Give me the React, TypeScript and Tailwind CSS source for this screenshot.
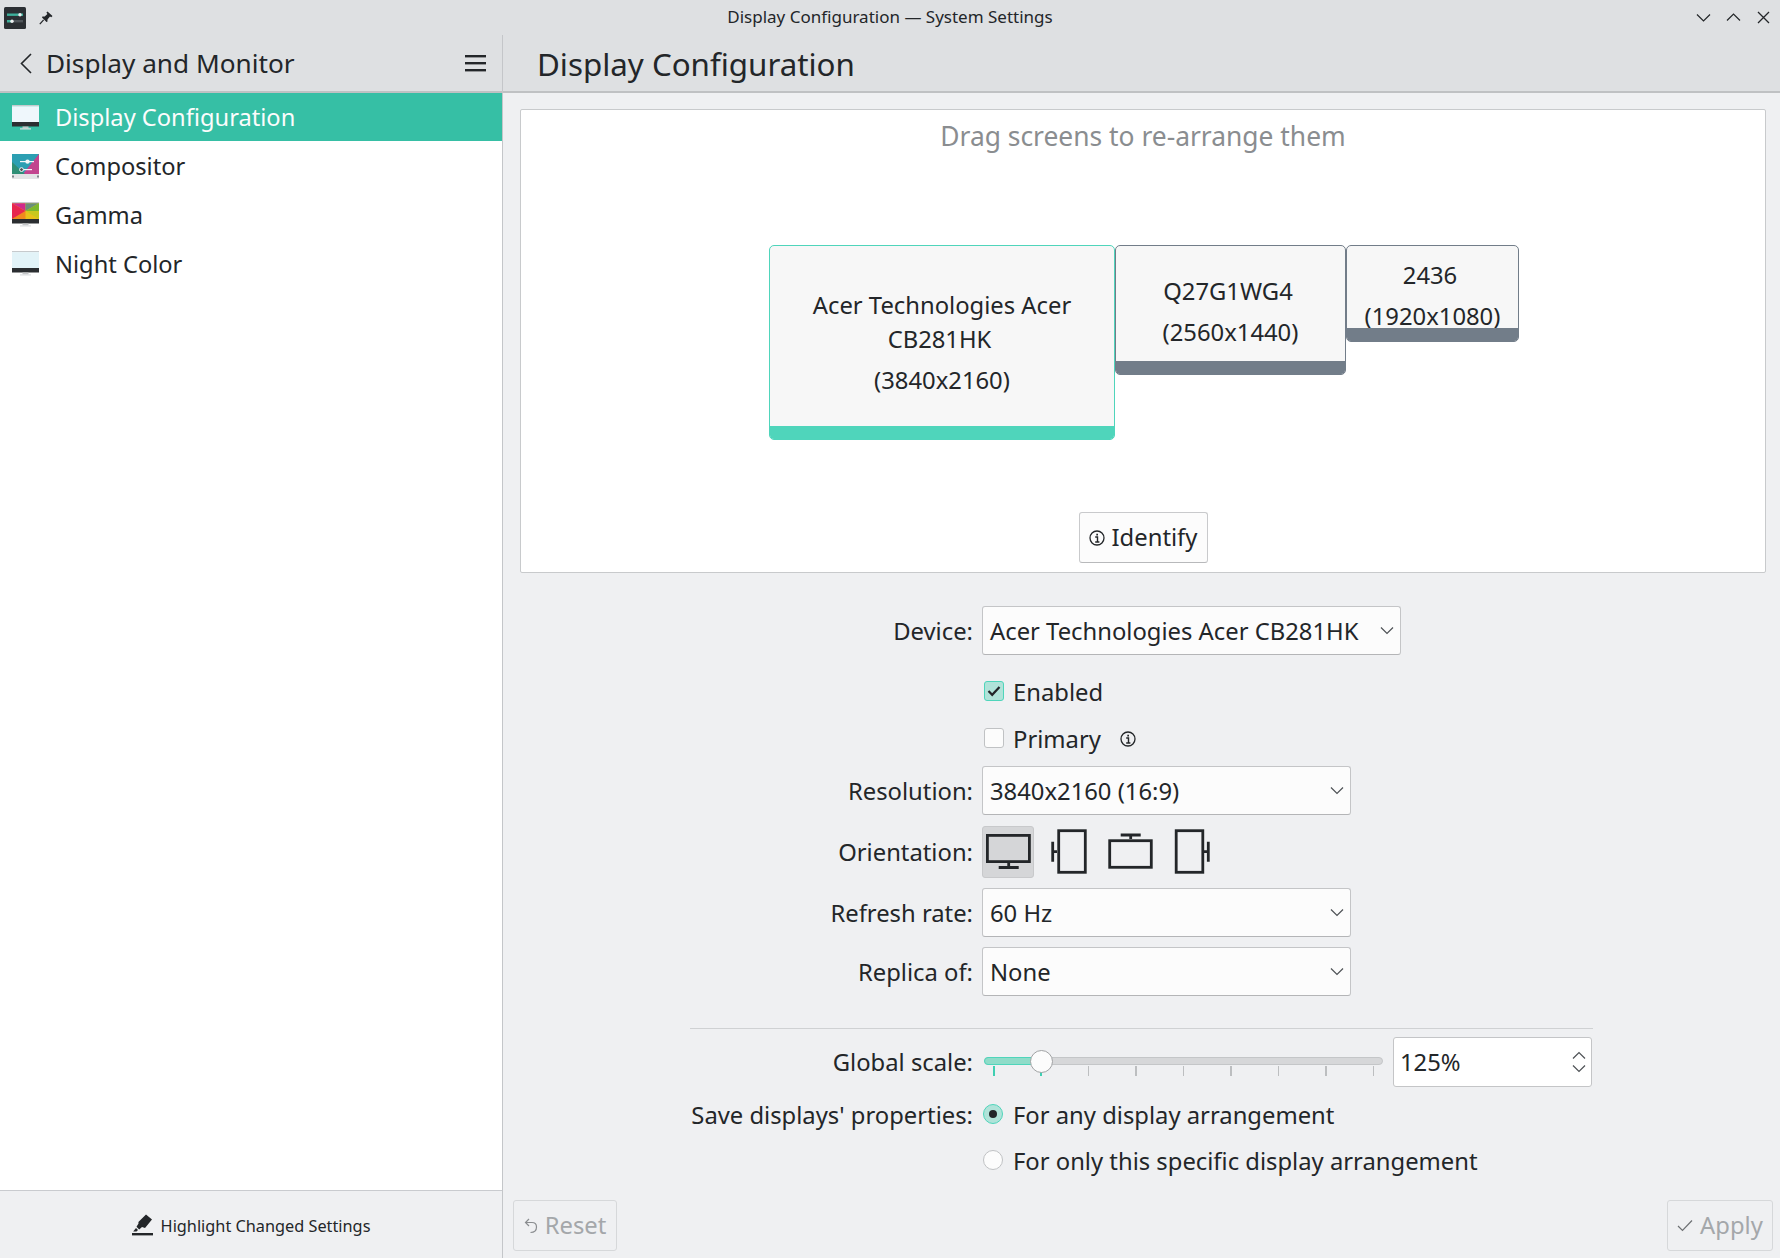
import React from "react";

const Chevron = ({ className = "" }: { className?: string }) => (
  <svg width="14" height="9" viewBox="0 0 14 9" fill="none" stroke="#4d5155" strokeWidth="1.2" className={className}>
    <path d="M1 1.5 L7 7.5 L13 1.5" />
  </svg>
);

const InfoIcon = ({ size = 15 }: { size?: number }) => (
  <svg width={size} height={size} viewBox="0 0 16 16" fill="none" stroke="#232629" strokeWidth="1.3">
    <circle cx="8" cy="8" r="7" />
    <path d="M6.2 7H8.5V12M6.2 12H10.4" strokeWidth="1.4" />
    <path d="M7.3 3.8H9V5.5H7.3Z" fill="#232629" stroke="none" />
  </svg>
);

const Combo = ({ text, className }: { text: string; className: string }) => (
  <div className={`flex items-center justify-between rounded-[3px] border border-[#c4c5c7] border-b-[#b4b5b7] bg-[#fcfcfc] pl-[7px] pr-[6px] ${className}`}>
    <span className="pt-[2px]">{text}</span>
    <Chevron />
  </div>
);

const Row = ({ label, className, children }: { label: string; className: string; children: React.ReactNode }) => (
  <div className={`flex items-center ${className}`}>
    <div className="w-[283px] shrink-0 whitespace-nowrap pt-[2px] text-right">{label}</div>
    <div className="ml-[9px] flex min-w-0 flex-1 items-center">{children}</div>
  </div>
);

const MonitorIcon = ({ top }: { top: React.ReactNode }) => (
  <svg width="27" height="25" viewBox="0 0 27 25" className="shrink-0">
    <rect x="0" y="0" width="27" height="1.2" fill="#c6cacd" />
    {top}
    <rect x="0" y="17" width="27" height="4.5" fill="#2b2e31" />
    <rect x="10.5" y="21.5" width="6" height="2" fill="#c4c6c8" />
    <rect x="8" y="23.3" width="11" height="1.2" fill="#dcdee0" />
  </svg>
);

const SidebarItem = ({ icon, label, className }: { icon: React.ReactNode; label: string; className: string }) => (
  <div className={`flex items-center pl-[12px] ${className}`}>
    <div className="flex w-[43px] shrink-0 items-center">{icon}</div>
    <span className="pt-[2px] text-[23.67px]">{label}</span>
  </div>
);

const Screen = ({ lines, res, className, active }: { lines: string[]; res: string; className: string; active?: boolean }) => (
  <div className={`absolute top-[135px] flex flex-col items-center justify-center overflow-hidden rounded-[5px] border bg-[#f7f7f7] text-center ${active ? "border-[#4fd5bb]" : "border-[#727d89]"} ${className}`}>
    {lines.map((l, i) => (
      <div key={l} className={i === lines.length - 1 ? "pr-[5px] leading-[34px]" : "leading-[34px]"}>{l}</div>
    ))}
    <div className="mt-[8px] leading-[33px]">{res}</div>
    <div className={`absolute bottom-0 left-0 right-0 h-[13px] ${active ? "bg-[#4fd5bb]" : "bg-[#727d89]"}`} />
  </div>
);

const ticks = [0, 1, 2, 3, 4, 5, 6, 7, 8];

export default function App() {
  return (
    <div className="flex h-[1258px] w-[1780px] flex-col overflow-hidden bg-[#eff0f2] font-['Noto_Sans',sans-serif] text-[23.8px] text-[#232629]">
      {/* Title bar */}
      <div className="grid h-[35px] shrink-0 grid-cols-[1fr_auto_1fr] items-center bg-[#dee0e2] text-[17px]">
        <div className="flex items-center pl-[4px]">
          <svg width="22" height="22" viewBox="0 0 22 22">
            <rect width="22" height="22" rx="1.5" fill="#2b2f33" />
            <rect x="3" y="6.5" width="16" height="2.4" fill="#3daf9a" />
            <circle cx="16" cy="7.7" r="1.7" fill="#eef0f1" />
            <rect x="3" y="13" width="16" height="2.4" fill="#50565b" />
            <rect x="3" y="13" width="5" height="2.4" fill="#3daf9a" />
            <circle cx="8" cy="14.2" r="1.7" fill="#eef0f1" />
          </svg>
          <svg width="14" height="14" viewBox="0 0 14 14" className="ml-[13px]" fill="#232629">
            <path d="M8.5 0.5 L13.5 5 L12.3 6.2 L11 5.6 L8.5 8.4 L8.4 10.8 L7.5 11 L3 6.5 L3.4 5.6 L5.7 5.5 L8.4 2.9 L7.4 1.6 Z" />
            <path d="M4.6 8.8 L0.8 13.2" stroke="#232629" strokeWidth="1.2" />
          </svg>
        </div>
        <div className="pb-[2px]">Display Configuration — System Settings</div>
        <div className="flex items-center justify-end gap-[15px] pr-[9px]">
          <svg width="15" height="15" viewBox="0 0 15 15" fill="none" stroke="#232629" strokeWidth="1.2"><path d="M1 4.5 L7.5 11 L14 4.5" /></svg>
          <svg width="15" height="15" viewBox="0 0 15 15" fill="none" stroke="#232629" strokeWidth="1.2"><path d="M1 10.5 L7.5 4 L14 10.5" /></svg>
          <svg width="15" height="15" viewBox="0 0 15 15" fill="none" stroke="#232629" strokeWidth="1.3"><path d="M2 2 L13 13 M13 2 L2 13" /></svg>
        </div>
      </div>

      <div className="flex min-h-0 flex-1">
        {/* Sidebar */}
        <aside className="flex w-[503px] shrink-0 flex-col border-r border-r-[#c4c6c9] bg-white">
          <div className="flex h-[58px] shrink-0 items-center border-b-2 border-b-[#bfc1c3] bg-[#dee0e2] pl-[19px] pr-[16px] text-[26.2px]">
            <svg width="14" height="21" viewBox="0 0 14 21" fill="none" stroke="#232629" strokeWidth="1.6"><path d="M12 1 L2.5 10.5 L12 20" /></svg>
            <span className="ml-[13px] flex-1 pt-[2px]">Display and Monitor</span>
            <svg width="21" height="17" viewBox="0 0 21 17" fill="#232629">
              <rect y="0" width="21" height="2.4" />
              <rect y="7" width="21" height="2.4" />
              <rect y="14" width="21" height="2.4" />
            </svg>
          </div>
          <div className="flex-1">
            <SidebarItem
              className="mb-[0.7px] h-[48px] bg-[#36bfa5] text-[#fcfcfc]"
              label="Display Configuration"
              icon={<MonitorIcon top={<rect y="1.2" width="27" height="16" fill="#eff7fc" />} />}
            />
            <SidebarItem
              className="h-[48.7px]"
              label="Compositor"
              icon={
                <svg width="27" height="25" viewBox="0 0 27 25" className="shrink-0">
                  <rect width="27" height="21" fill="#2c9fb2" />
                  <path d="M27 0 V21 H10 Z" fill="#c2458f" />
                  <path d="M0 8 L14 21 H0 Z" fill="#2f8f76" />
                  <rect x="0" y="20" width="27" height="5" fill="#e2e4e6" />
                  <rect x="0" y="21.5" width="2" height="2" fill="#7f8488" />
                  <rect x="25" y="21.5" width="2" height="2" fill="#7f8488" />
                  <rect x="8" y="7" width="14" height="1.2" fill="#f4f6f8" />
                  <circle cx="15.5" cy="7.6" r="2.2" fill="#f4f6f8" />
                  <rect x="8" y="15" width="12" height="1.2" fill="#f4f6f8" />
                  <circle cx="9.5" cy="15.6" r="1.9" fill="#4a4f54" stroke="#f4f6f8" />
                </svg>
              }
            />
            <SidebarItem
              className="h-[48.7px]"
              label="Gamma"
              icon={
                <MonitorIcon
                  top={
                    <>
                      <path d="M0 1.2 H27 V17 H0 Z" fill="#e8c21a" />
                      <path d="M13.5 9 L0 1.2 H13.5 Z" fill="#cf2a8c" />
                      <path d="M13.5 9 L13.5 1.2 H27 Z" fill="#6a8f7a" />
                      <path d="M13.5 9 L27 1.2 V9 Z" fill="#7cb82e" />
                      <path d="M13.5 9 L27 9 V17 Z" fill="#c9c81e" />
                      <path d="M13.5 9 L13.5 17 H0 Z" fill="#f08a1e" />
                      <path d="M13.5 9 L0 17 V1.2 Z" fill="#e8264f" />
                    </>
                  }
                />
              }
            />
            <SidebarItem
              className="h-[48.7px]"
              label="Night Color"
              icon={<MonitorIcon top={<rect y="1.2" width="27" height="16" fill="#e2f3f8" />} />}
            />
          </div>
          <div className="flex h-[68px] shrink-0 items-center justify-center border-t border-t-[#c9cbcf] bg-[#eff0f2] text-[16.3px]">
            <svg width="21" height="22" viewBox="0 0 21 22" fill="#232629" className="mr-[8px]">
              <path d="M14 0.5 L20 5.5 L13 14 L10 13 L7.2 15.5 L4.5 12.8 L6.5 9.5 L6.4 8 Z" />
              <path d="M4 14 L6 16 L4.5 17.5 L1.2 17.5 Z" />
              <rect x="0" y="19" width="21" height="2.4" />
            </svg>
            <span className="pt-[3px]">Highlight Changed Settings</span>
          </div>
        </aside>

        {/* Main */}
        <main className="flex min-w-0 flex-1 flex-col">
          <div className="flex h-[58px] shrink-0 items-center border-b-2 border-b-[#bfc1c3] bg-[#dee0e2] pl-[34px] pt-[3px] text-[31.3px]">
            Display Configuration
          </div>
          <div className="relative ml-[17px] mr-[14px] mt-[16px] flex h-[464px] shrink-0 flex-col items-center justify-between rounded-[2px] border border-[#c8cacc] bg-white pb-[9px]">
            <div className="h-[52px] text-[26.4px] leading-[52px] text-[#8a8d90]">Drag screens to re-arrange them</div>
            <Screen active lines={["Acer Technologies Acer", "CB281HK"]} res="(3840x2160)" className="left-[248px] h-[195px] w-[346px]" />
            <Screen lines={["Q27G1WG4"]} res="(2560x1440)" className="left-[594px] h-[130px] w-[231px] pt-[2px]" />
            <Screen lines={["2436"]} res="(1920x1080)" className="left-[825px] h-[97px] w-[173px] pt-[4px]" />
            <div className="flex h-[51px] w-[129px] items-center justify-center gap-[7px] rounded-[3px] border border-[#c9cacc] border-b-[#b8b9bb] bg-[#fcfcfc]">
              <InfoIcon size={16} />
              <span className="pt-[1px]">Identify</span>
            </div>
          </div>

          <div className="w-[903px] self-center">
            <Row label="Device:" className="mt-[33px] h-[49px]">
              <Combo text="Acer Technologies Acer CB281HK" className="h-[49px] w-[419px]" />
            </Row>
            <Row label="" className="mt-[17px] h-[40px]">
              <div className="mb-[2px] ml-[2px] flex h-[20px] w-[20px] items-center justify-center rounded-[3px] border border-[#4fd5bb] bg-[#b0e3d9]">
                <svg width="14" height="12" viewBox="0 0 14 12" fill="none" stroke="#232629" strokeWidth="2.2"><path d="M1.5 6 L5.2 9.8 L12.5 2" /></svg>
              </div>
              <span className="ml-[9px] pt-[2px]">Enabled</span>
            </Row>
            <Row label="" className="mt-[7px] h-[40px]">
              <div className="mb-[2px] ml-[2px] h-[20px] w-[20px] rounded-[3px] border border-[#c0c2c4] bg-[#fcfcfc]" />
              <span className="ml-[9px] pt-[2px]">Primary</span>
              <span className="ml-[19px] flex"><InfoIcon size={16} /></span>
            </Row>
            <Row label="Resolution:" className="mt-[7px] h-[49px]">
              <Combo text="3840x2160 (16:9)" className="h-[49px] w-[369px]" />
            </Row>
            <Row label="Orientation:" className="mt-[11px] h-[51px]">
              <div className="flex gap-[9px]">
                <div className="h-[52px] w-[52px] rounded-[3px] border border-[#c8c9cb] bg-[#d5d6d8]">
                  <svg width="50" height="50" viewBox="0 1 50 50" fill="none" stroke="#232629" strokeWidth="2.8">
                    <rect x="4.4" y="9.4" width="42" height="26.2" />
                    <path d="M25.7 37 V41.5 M15.7 41.5 H35.7" />
                  </svg>
                </div>
                <div className="h-[51px] w-[52px]">
                  <svg width="52" height="51" viewBox="-1 0 52 51" fill="none" stroke="#232629" strokeWidth="2.8">
                    <rect x="14.7" y="4.7" width="26.6" height="41.6" />
                    <path d="M13 25.7 H9 M8.7 15.7 V35.7" />
                  </svg>
                </div>
                <div className="h-[51px] w-[52px]">
                  <svg width="52" height="51" viewBox="-1 0 52 51" fill="none" stroke="#232629" strokeWidth="2.8">
                    <rect x="4.7" y="14.7" width="41.6" height="26.6" />
                    <path d="M25.7 13 V9 M15.7 9 H35.7" />
                  </svg>
                </div>
                <div className="h-[51px] w-[52px]">
                  <svg width="52" height="51" viewBox="-1 0 52 51" fill="none" stroke="#232629" strokeWidth="2.8">
                    <rect x="10.2" y="4.7" width="26.6" height="41.6" />
                    <path d="M38 25.7 H42 M42.3 15.7 V35.7" />
                  </svg>
                </div>
              </div>
            </Row>
            <Row label="Refresh rate:" className="mt-[11px] h-[49px]">
              <Combo text="60 Hz" className="h-[49px] w-[369px]" />
            </Row>
            <Row label="Replica of:" className="mt-[10px] h-[49px]">
              <Combo text="None" className="h-[49px] w-[369px]" />
            </Row>
            <div className="mt-[32px] h-px bg-[#cfd1d3]" />
            <Row label="Global scale:" className="mt-[8px] h-[50px]">
              <div className="relative ml-[2px] h-[50px] w-[399px]">
                <div className="absolute left-0 right-0 top-[20px] h-[8px] rounded-full border border-[#c4c6c8] bg-[#d6d7d9]" />
                <div className="absolute left-0 top-[20px] h-[8px] w-[58px] rounded-l-full border border-[#4fd5bb] bg-[#8fdcc9]" />
                <div className="absolute left-[9px] right-[9px] top-[29px] flex justify-between">
                  {ticks.map((t) => (
                    <div key={t} className={`h-[10px] w-[1.5px] ${t < 2 ? "bg-[#3fcfb2]" : "bg-[#bcbec0]"}`} />
                  ))}
                </div>
                <div className="absolute left-[46px] top-[13px] h-[23px] w-[23px] rounded-full border border-[#a0a2a4] bg-[#fcfcfc]" />
              </div>
              <div className="ml-[10px] flex h-[50px] w-[199px] items-center justify-between rounded-[3px] border border-[#c4c5c7] bg-white pl-[6px] pr-[5px]">
                <span className="pt-[2px]">125%</span>
                <div className="flex flex-col gap-[4px]">
                  <svg width="14" height="9" viewBox="0 0 14 9" fill="none" stroke="#4d5155" strokeWidth="1.2"><path d="M1 7.5 L7 1.5 L13 7.5" /></svg>
                  <Chevron />
                </div>
              </div>
            </Row>
            <Row label="Save displays' properties:" className="mt-[7px] h-[42px]">
              <div className="mb-[2px] ml-[1px] flex h-[20px] w-[20px] items-center justify-center rounded-full border border-[#4fd5bb] bg-[#b0e3d9]">
                <div className="h-[8px] w-[8px] rounded-full bg-[#232629]" />
              </div>
              <span className="ml-[10px] pt-[2px]">For any display arrangement</span>
            </Row>
            <Row label="" className="mt-[4px] h-[42px]">
              <div className="mb-[2px] ml-[1px] h-[20px] w-[20px] rounded-full border border-[#c0c2c4] bg-[#fcfcfc]" />
              <span className="ml-[10px] whitespace-nowrap pt-[2px]">For only this specific display arrangement</span>
            </Row>
          </div>

          <div className="mt-auto flex items-center justify-between pb-[7px] pl-[10px] pr-[7px] text-[#a4a7aa]">
            <div className="flex h-[51px] w-[104px] items-center justify-center gap-[7px] rounded-[3px] border border-[#d6d8da]">
              <svg width="14" height="16" viewBox="0 0 14 16" fill="none" stroke="#8a8d90" strokeWidth="1.2"><path d="M5 1 L1.5 4.5 L5 8 M1.5 4.5 H8 C11 4.5 12.5 6.5 12.5 9 C12.5 12 10.5 14.5 6.5 14.5" /></svg>
              <span className="pt-[1px]">Reset</span>
            </div>
            <div className="flex h-[51px] w-[106px] items-center justify-center gap-[7px] rounded-[3px] border border-[#d6d8da]">
              <svg width="16" height="13" viewBox="0 0 16 13" fill="none" stroke="#6d7073" strokeWidth="1.2"><path d="M1 7 L5.5 11.5 L15 1.5" /></svg>
              <span className="pt-[1px]">Apply</span>
            </div>
          </div>
        </main>
      </div>
    </div>
  );
}
